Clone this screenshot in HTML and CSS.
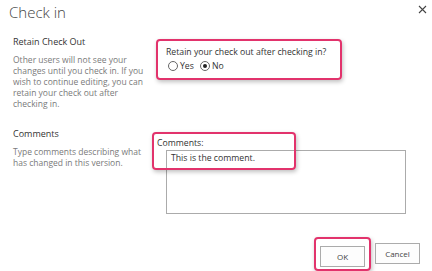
FILE: index.html
```html
<!DOCTYPE html>
<html lang="en">
<head>
    <meta charset="UTF-8">
    <meta name="viewport" content="width=device-width, initial-scale=1.0">
    <title>Check in</title>
    <link rel="stylesheet" href="styles.css">
</head>
<body>

    <div class="dialog">
        <!-- Header -->
        <div class="dialog-header">
            <h1>Check in</h1>
            <svg class="close-btn" width="9" height="9" viewBox="0 0 9 9">
                <path d="M1 1L8 8M8 1L1 8" stroke="#444" stroke-width="1.1" fill="none"/>
            </svg>
        </div>

        <!-- Retain check out -->
        <div class="section section-retain">
            <div class="section-info">
                <h3>Retain Check Out</h3>
                <p>Other users will not see your changes until you check in. If you wish to continue editing, you can retain your check out after checking in.</p>
            </div>
            <div class="section-field">
                <div class="highlight retain-box">
                    <div class="field-label">Retain your check out after checking in?</div>
                    <div class="radio-row">
                        <label><span class="radio"></span>Yes</label>
                        <label><span class="radio checked"></span>No</label>
                    </div>
                </div>
            </div>
        </div>

        <!-- Comments -->
        <div class="section section-comments">
            <div class="section-info">
                <h3>Comments</h3>
                <p>Type comments describing what has changed in this version.</p>
            </div>
            <div class="section-field comments-field">
                <div class="field-label comments-label">Comments:</div>
                <div class="textarea">This is the comment.</div>
                <div class="highlight comments-box"></div>
            </div>
        </div>

        <!-- Buttons -->
        <div class="button-row">
            <div class="highlight ok-box">
                <button>OK</button>
            </div>
            <button>Cancel</button>
        </div>
    </div>

</body>
</html>
```

FILE: styles.css
```css
/* Global Styles */
body {
    margin: 0;
    padding: 0;
    background: #fff;
    font-family: "Open Sans", "Noto Sans", sans-serif;
    color: #444;
}

.dialog {
    width: 432px;
    height: 271px;
    position: relative;
}

.dialog-header {
    display: flex;
    justify-content: space-between;
    align-items: flex-start;
    padding: 2px 5px 0 9px;
}

h1 {
    margin: 0;
    font-size: 15px;
    font-weight: 300;
    line-height: 20px;
    color: #444;
}

.close-btn {
    margin-top: 3px;
}

.section {
    display: grid;
    grid-template-columns: 143px 1fr;
    padding-left: 13px;
}

.section-retain {
    margin-top: 14px;
}

.section-comments {
    margin-top: 19px;
}

.section-info h3 {
    margin: 0;
    font-size: 9px;
    font-weight: 400;
    line-height: 12px;
    color: #333;
}

.section-info p {
    margin: 6px 0 0;
    width: 134px;
    font-size: 8.5px;
    line-height: 11px;
    color: #7a7a7a;
}

/* Pink annotation boxes */
.highlight {
    border: 2px solid #e2336c;
    border-radius: 4px;
    box-shadow: 1px 2px 4px rgba(0, 0, 0, 0.25);
}

.retain-box {
    width: 170px;
    margin-top: 3px;
    padding: 5px 4px 6px 8px;
}

.field-label {
    font-size: 8.7px;
    line-height: 12px;
    color: #333;
}

.radio-row {
    display: flex;
    gap: 4px;
    margin-top: 2px;
    font-size: 8.7px;
    line-height: 12px;
    color: #333;
}

.radio-row label {
    display: flex;
    align-items: center;
}

.radio {
    width: 8px;
    height: 8px;
    border: 1px solid #666;
    border-radius: 50%;
    margin: 0 2px 0 2px;
    position: relative;
}

.radio.checked::after {
    content: "";
    position: absolute;
    top: 2px;
    left: 2px;
    width: 4px;
    height: 4px;
    border-radius: 50%;
    background: #222;
}

/* Comments */
.comments-field {
    position: relative;
    padding-top: 9px;
}

.comments-label {
    padding-left: 2px;
    margin-left: -1px;
}

.textarea {
    width: 230px;
    height: 60px;
    margin: 1px 0 0 10px;
    border: 1px solid #ababab;
    padding: 1px 4px;
    font-size: 8.7px;
    line-height: 12px;
    color: #333;
}

.comments-box {
    position: absolute;
    left: -4px;
    top: 4px;
    width: 140px;
    height: 34px;
}

/* Buttons */
.button-row {
    position: absolute;
    right: 12px;
    top: 237px;
    display: flex;
    align-items: flex-start;
    gap: 4px;
}

.ok-box {
    padding: 4px 4px 2px 4px;
}

button {
    width: 45px;
    height: 21px;
    background: #fdfdfd;
    border: 1px solid #ababab;
    font-family: "Open Sans", "Noto Sans", sans-serif;
    font-size: 8px;
    color: #444;
    padding: 0;
}

.button-row > button {
    margin-top: 6px;
}
```
